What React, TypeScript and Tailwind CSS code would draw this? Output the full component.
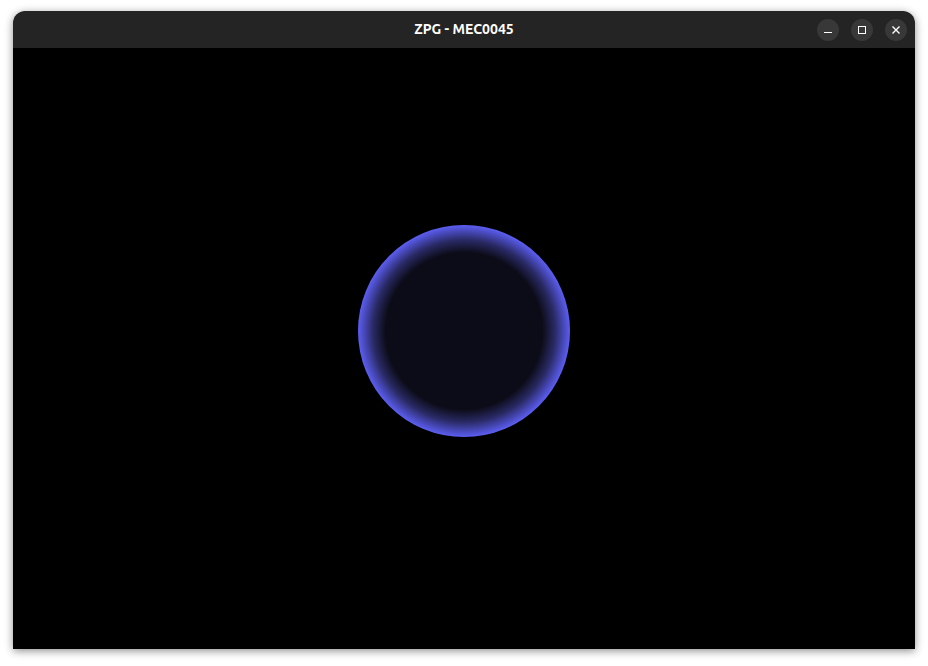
import React from "react";

const WindowButton: React.FC<{ kind: "min" | "max" | "close" }> = ({ kind }) => (
  <div className="w-[22px] h-[22px] rounded-full bg-[#383838] flex items-center justify-center">
    {kind === "min" && <div className="w-[8px] h-[1px] bg-white mt-[5px]" />}
    {kind === "max" && <div className="w-[8px] h-[8px] border border-white" />}
    {kind === "close" && (
      <svg width="10" height="10" viewBox="0 0 10 10">
        <path d="M1.5 1.5 L8.5 8.5 M8.5 1.5 L1.5 8.5" stroke="white" strokeWidth="1.4" />
      </svg>
    )}
  </div>
);

export default function App() {
  return (
    <div className="w-[928px] h-[666px] bg-white pt-[11px] pl-[13px] overflow-hidden">
      <div className="w-[902px] h-[638px] flex flex-col rounded-t-[12px] overflow-hidden shadow-[0_2px_8px_rgba(0,0,0,0.45)]">
        {/* Title bar */}
        <div className="h-[37px] bg-[#242424] flex items-center relative">
          <div
            className="flex-1 text-center text-white text-[14px] font-bold"
            style={{ fontFamily: "Ubuntu, 'Open Sans', 'Noto Sans', sans-serif" }}
          >
            ZPG - MEC0045
          </div>
          <div className="absolute right-[8px] top-[8px] flex gap-[12px]">
            <WindowButton kind="min" />
            <WindowButton kind="max" />
            <WindowButton kind="close" />
          </div>
        </div>

        {/* GL viewport */}
        <div className="flex-1 bg-black flex flex-col items-center">
          <div className="mt-[177px] w-[212px] h-[212px] rounded-full bg-[radial-gradient(circle_closest-side,#0c0c18_0%,#0c0c18_74%,#2a2a66_86%,#5c5ef2_100%)]" />
        </div>
      </div>
    </div>
  );
}
